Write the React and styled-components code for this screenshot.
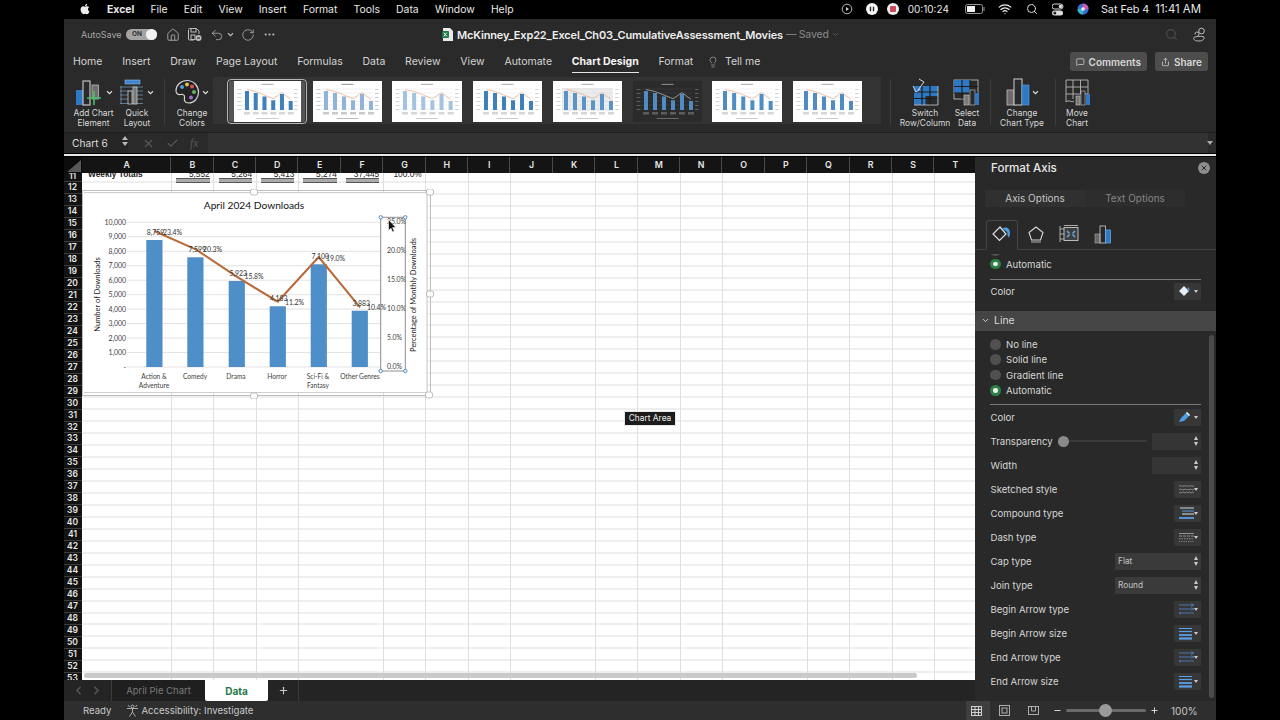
import React from 'react';
import styled, { createGlobalStyle } from 'styled-components';
import { FaApple } from 'react-icons/fa';
import { Home, Undo2, RotateCw, MoreHorizontal, Search, Wifi, Lightbulb, MessageSquare, Share, ChevronDown, X, Check, ChevronRight, ChevronLeft, Plus, Minus } from 'lucide-react';

const Global = createGlobalStyle`
  html, body { margin: 0; padding: 0; background: #000; }
  * { box-sizing: border-box; }
  body { font-family: Inter, "Liberation Sans", sans-serif; }
`;

const Stage = styled.div`
  width: 1280px; height: 720px; background: #000; padding: 0 64px; overflow: hidden;
`;
const Screen = styled.div`
  width: 1152px; height: 720px; display: flex; flex-direction: column; color: #e4e4e4; font-size: 10.5px;
`;

/* ---------- macOS menu bar ---------- */
const MenuBar = styled.div`
  height: 19px; flex: none; background: #000; display: flex; align-items: center; padding: 0 15px 1px 15px; color: #e8e8e8; font-size: 10.4px;
`;
const MenuList = styled.div`display: flex; align-items: center; gap: 16.2px; margin-left: 16px;`;
const MenuItem = styled.span`font-weight: ${p => (p.$bold ? 700 : 400)};`;
const StatusTray = styled.div`margin-left: auto; display: flex; align-items: center; gap: 0; font-size: 10px;`;
const TrayItem = styled.span`display: inline-flex; align-items: center; margin-left: ${p => p.$gap || 0}px; font-size: ${p => p.$size || 10}px;`;

/* ---------- title bar ---------- */
const TitleBar = styled.div`
  height: 31px; flex: none; background: #2a2a2a; display: flex; align-items: center; padding: 0 10px 0 17px; position: relative;
`;
const AutoLabel = styled.span`color: #a6a6a6; font-size: 9px; width: 40px; white-space: nowrap;`;
const Toggle = styled.span`
  width: 31px; height: 11px; margin-left: 5px; border-radius: 6px; background: #a5a5a5; position: relative; color: #333; font-size: 6.5px; font-weight: 700; line-height: 11px; padding-left: 6px;
  &::after { content: ''; position: absolute; right: 0; top: 0; width: 11px; height: 11px; border-radius: 50%; background: #f4f4f4; }
`;
const QuickIcon = styled.span`display: inline-flex; align-items: center; color: #bdbdbd; margin-left: ${p => p.$gap || 0}px;`;
const DocTitle = styled.div`
  display: flex; align-items: center; margin-left: 166px; font-size: 11px; font-weight: 600; color: #eeeeee; white-space: nowrap; letter-spacing: -0.15px;
`;
const DocSaved = styled.span`color: #7f7f7f; font-weight: 500; margin-left: 3px; font-size: 10.4px;`;
const TitleRight = styled.div`margin-left: auto; display: flex; align-items: center; gap: 14px;`;

/* ---------- ribbon tabs ---------- */
const TabBar = styled.div`
  height: 23px; flex: none; background: #2a2a2a; display: flex; align-items: center; padding: 0 8px 0 9px; font-size: 10.5px; position: relative;
`;
const TabList = styled.div`display: flex; align-items: center; gap: 19.75px; flex: 1;`;
const TabItem = styled.span`
  position: relative; color: ${p => (p.$active ? '#f4f4f4' : '#d4d4d4')}; font-weight: ${p => (p.$active ? 700 : 400)}; display: inline-flex; align-items: center; gap: 6px; white-space: nowrap; margin-left: ${p => p.$ml || 0}px;
  ${p => p.$active && `&::after { content: ''; position: absolute; left: 0; right: 0; bottom: -6px; height: 2px; background: #e6e6e6; }`}
`;
const PillButton = styled.button`
  height: 19px; border: 0; border-radius: 3px; background: #4d4d4d; color: #d8d8d8; font: 600 10px Inter, sans-serif; display: inline-flex; align-items: center; gap: 4px; padding: 0 6px; margin-left: 8px; width: ${p => p.$w}px; justify-content: center;
`;

/* ---------- ribbon ---------- */
const Ribbon = styled.div`
  height: 60px; flex: none; background: #2a2a2a; display: flex; align-items: flex-start; padding: 4px 0 0 6px; position: relative; border-bottom: 1px solid #1d1d1d;
`;
const RibbonBtn = styled.div`
  width: ${p => p.$w}px; margin-left: ${p => p.$ml || 0}px; display: flex; flex-direction: column; align-items: center; color: #d8d8d8; font-size: 8.4px; line-height: 9.6px; text-align: center; flex: none; white-space: nowrap;
`;
const RibbonIcon = styled.div`height: 28px; display: flex; align-items: center; justify-content: center; margin-bottom: 3px; margin-top: 1px; color: #ddd; gap: 2px;`;
const RibbonSep = styled.div`width: 1px; height: 46px; background: #3d3d3d; flex: none; margin-left: ${p => p.$ml || 0}px; margin-top: 2px;`;
const Gallery = styled.div`
  width: 668px; height: 47px; background: #333333; display: flex; align-items: flex-start; padding-top: 4px; position: relative; flex: none;
`;
const ThumbFrame = styled.div`
  width: ${p => p.$w}px; height: 41px; flex: none; margin-left: ${p => p.$ml}px; background: ${p => p.$dark ? '#222' : '#fff'}; display: flex; justify-content: center;
  ${p => p.$selected && `background: #555; outline: 1px solid #b5b5b5; outline-offset: 1px; border-radius: 2px;`}
`;
const ThumbInner = styled.svg`display: block; height: 41px; width: ${p => p.$w}px; background: ${p => p.$bg};`;

/* ---------- formula bar ---------- */
const FormulaBar = styled.div`height: 20px; flex: none; background: #2a2a2a; display: flex; align-items: stretch; position: relative;`;
const NameBox = styled.div`width: 64px; background: #262626; display: flex; align-items: center; padding-left: 8px; font-size: 10.2px; color: #dcdcdc; position: relative;`;
const Stepper = styled.span`position: absolute; right: 0; top: 3px; display: flex; flex-direction: column; gap: 2px;`;
const Tri = styled.i`
  display: block; width: 0; height: 0; border-left: ${p => p.$s || 3}px solid transparent; border-right: ${p => p.$s || 3}px solid transparent;
  ${p => p.$up ? `border-bottom: 4px solid ${p.$c || '#bbb'};` : `border-top: 4px solid ${p.$c || '#bbb'};`}
`;
const FxIcons = styled.div`width: 80px; display: flex; align-items: center; gap: 11px; padding-left: 14px; color: #5a5a5a; font: italic 11.5px "Liberation Serif", serif;`;
const FormulaInput = styled.div`flex: 1; background: #323232; margin: 0 8px 0 0; display: flex;`;
const FormulaDrop = styled.div`position: absolute; right: 3px; top: 8px;`;
const WhiteRule = styled.div`height: 4px; flex: none; background: #000; position: relative;
  &::after { content: ''; position: absolute; left: 0; right: 0; top: 1px; height: 2px; background: #e8e8e8; }`;

/* ---------- workspace ---------- */
const Work = styled.div`flex: 1; display: flex; min-height: 0;`;
const SheetColumn = styled.div`width: 911px; flex: none; display: flex; flex-direction: column; min-height: 0;`;
const ColHeader = styled.div`height: 16px; flex: none; display: flex; background: #141414;`;
const Corner = styled.div`width: 18px; flex: none; background: #0c0c0c; position: relative;
  &::after { content: ''; position: absolute; right: 1px; bottom: 1px; width: 0; height: 0; border-left: 14px solid transparent; border-bottom: 12px solid #585858; }`;
const ColCell = styled.div`
  width: ${p => p.$w}px; flex: none; text-align: center; font-size: 8.8px; font-weight: 600; line-height: 16px; color: #e6e6e6; border-right: 1px solid #4a4a4a; overflow: hidden; padding-left: 1px;
`;
const SheetBody = styled.div`flex: 1; display: flex; min-height: 0; position: relative; overflow: hidden;`;
const RowHeads = styled.div`width: 18px; flex: none; background: #121212; overflow: hidden;`;
const RowStack = styled.div`margin-top: -2.5px;`;
const RowHead = styled.div`
  height: 11.96px; line-height: 11.96px; text-align: center; font-size: 8.5px; font-weight: 600; color: #e8e8e8; border-bottom: 0.5px solid #3c3c3c; padding-right: 1px;
`;
const Cells = styled.div`
  flex: 1; position: relative; background-color: #fff; overflow: hidden;
  background-image:
    repeating-linear-gradient(to bottom, transparent 0, transparent 10.96px, #dfdfdf 10.96px, #dfdfdf 11.96px),
    linear-gradient(to right, transparent 88.8px, #dfdfdf 88.8px, #dfdfdf 89.6px, transparent 89.6px),
    repeating-linear-gradient(to right, #dfdfdf 0, #dfdfdf 0.8px, transparent 0.8px, transparent 42.4px);
  background-size: 100% 100%, 100% 100%, calc(100% - 89.3px) 100%;
  background-position: 0 -2.5px, 0 0, 89.3px 0;
  background-repeat: repeat-y, no-repeat, no-repeat;
`;
const TotalsRow = styled.div`display: flex; height: 9px; font: 400 8.3px "Liberation Sans", sans-serif; color: #222; line-height: 8px; margin-top: -3px;`;
const TotalsLabel = styled.div`width: 89.3px; padding-left: 6px; flex: none; font-weight: 700;`;
const TotalsCell = styled.div`
  width: 42.4px; flex: none; text-align: right; padding-right: 4px; position: relative;
  ${p => !p.$plain && `&::after { content: ''; position: absolute; left: 5px; right: 4px; top: 8px; height: 3px; border-top: 1px solid #555; border-bottom: 1px solid #555; background: #aaa; }`}
`;
const ChartWrap = styled.div`position: absolute; left: 0; top: 16px; width: 352px; height: 210px;`;
const HScroll = styled.div`position: absolute; left: 2px; top: 500px; width: 833px; height: 5px; border-radius: 3px; background: #c9c9c9;`;
const ChartTip = styled.div`
  position: absolute; left: 542px; top: 238px; width: 52px; text-align: center; background: #1c1c1c; color: #eee; font-size: 8.4px; line-height: 13px; height: 15px; border: 1px solid #e8e8e8; border-radius: 1px; white-space: nowrap;
`;

/* ---------- sheet tabs ---------- */
const SheetTabs = styled.div`height: 21px; flex: none; background: #242424; display: flex; align-items: stretch; font-size: 9.5px;`;
const TabNav = styled.div`width: 48px; display: flex; align-items: center; justify-content: center; gap: 5px; color: #555; border-right: 1px solid #3a3a3a; padding-right: 1px;`;
const SheetTab = styled.div`
  width: ${p => p.$w}px; display: flex; align-items: center; justify-content: center; white-space: nowrap;
  background: ${p => p.$active ? '#fff' : '#1f1f1f'}; color: ${p => p.$active ? '#1d7a46' : '#7a7a7a'}; font-weight: ${p => p.$active ? 700 : 400};
  ${p => p.$active && 'border-radius: 0 0 2px 2px; font-size: 10px;'}
`;
const AddSheet = styled.div`width: 31px; display: flex; align-items: center; justify-content: center; color: #c8c8c8; border-right: 1px solid #3a3a3a;`;

/* ---------- format pane ---------- */
const Pane = styled.aside`width: 241px; flex: none; background: #292929; display: flex; flex-direction: column; position: relative; color: #d6d6d6; font-size: 9.6px; min-height: 0; overflow: hidden;`;
const PaneHead = styled.div`height: 22px; flex: none; display: flex; align-items: center; justify-content: space-between; padding: 0 6px 0 16px; font-size: 11.6px; color: #e6e6e6; font-weight: 500;`;
const CloseBtn = styled.span`width: 12px; height: 12px; border-radius: 50%; background: #8e8e8e; color: #292929; display: flex; align-items: center; justify-content: center;`;
const Segments = styled.div`display: flex; margin: 11px 31px 0 10px; height: 17px; flex: none;`;
const Segment = styled.div`width: 100px; text-align: center; line-height: 17px; font-size: 10px; background: ${p => p.$on ? '#303030' : '#2d2d2d'}; color: ${p => p.$on ? '#c4c4c4' : '#858585'};`;
const IconTabs = styled.div`height: 30px; margin-top: 13px; flex: none; display: flex; padding-left: 11px; border-bottom: 1px solid #414141;`;
const IconTab = styled.div`width: 32px; margin-right: 1.5px; height: 30px; padding-bottom: 2px; display: flex; align-items: center; justify-content: center; ${p => p.$on && `border: 1px solid #454545; border-bottom: 1px solid #292929; border-radius: 3px 3px 0 0;`}`;
const PaneScrollArea = styled.div`flex: 1; min-height: 0; display: flex; flex-direction: column; padding-top: 3.5px;`;
const RadioPeek = styled.div`height: 3px; overflow: hidden; padding-left: 15px; flex: none; & > span { margin-top: -8px; }`;
const RadioRow = styled.div`height: 15.3px; display: flex; align-items: center; padding-left: 15px; gap: 5.5px; flex: none;`;
const Radio = styled.span`width: 10.5px; height: 10.5px; border-radius: 50%; background: ${p => p.$on ? '#2c7f46' : '#505050'}; display: flex; align-items: center; justify-content: center;
  ${p => p.$on && `&::after { content: ''; width: 4.5px; height: 4.5px; border-radius: 50%; background: #e8f5ec; }`}`;
const Divider = styled.div`height: ${p => p.$h || 1}px; background: #7a7a7a; margin: ${p => p.$mt || 6}px 15px 0; flex: none;`;
const PropRow = styled.div`height: 24px; display: flex; align-items: center; padding: 0 15px 0 15.5px; justify-content: space-between; flex: none;`;
const SwatchBtn = styled.span`width: 27px; height: 17px; background: #373737; border-radius: 1px; display: flex; align-items: center; justify-content: flex-start; padding-left: 4px; position: relative;
  &::after { content: ''; position: absolute; right: 3px; top: 7px; border-left: 2px solid transparent; border-right: 2px solid transparent; border-top: 3px solid #ccc; }`;
const SectionBar = styled.div`height: 20px; margin-top: 7px; background: #454545; display: flex; align-items: center; padding-left: 6px; gap: 4px; font-size: 10.4px; color: #d8d8d8; flex: none;`;
const LineOptions = styled.div`padding-top: 6px; display: flex; flex-direction: column; flex: none;`;
const NumberField = styled.span`width: 49px; height: 17px; background: #353535; position: relative; display: block;`;
const FieldStep = styled.span`position: absolute; right: 3px; top: 3px; display: flex; flex-direction: column; gap: 2px;`;
const SliderWrap = styled.span`flex: 1; display: flex; align-items: center; margin: 0 5px 0 5px; position: relative; height: 12px;`;
const SliderTrack = styled.span`flex: 1; height: 2px; background: #3a3a3a;`;
const SliderKnob = styled.span`position: absolute; left: 0; top: .5px; width: 11px; height: 11px; border-radius: 50%; background: #8a8a8a;`;
const SelectField = styled.span`width: 86px; height: 17px; background: #3a3a3a; font-size: 8.3px; color: #c4c4c4; line-height: 17px; padding-left: 3px; position: relative; display: block;`;
const PaneScrollbar = styled.div`position: absolute; right: 2px; top: 178px; width: 5px; height: 363px; background: #4b4b4b; border-radius: 3px;`;

/* ---------- status bar ---------- */
const StatusBar = styled.div`height: 19px; flex: none; background: #2e2e2e; display: flex; align-items: center; padding-left: 19px; font-size: 9.6px; color: #c8c8c8; position: relative;`;
const Access = styled.div`display: flex; align-items: center; gap: 2px; margin-left: 15px;`;
const ViewGroup = styled.div`margin-left: auto; display: flex; align-items: center; height: 19px; padding-right: 19px;`;
const ViewBtn = styled.span`width: ${p => p.$w || 29}px; height: 19px; display: flex; align-items: center; justify-content: center; background: ${p => p.$on ? '#3f3f3f' : 'transparent'}; padding-right: ${p => p.$on ? 4 : 0}px;`;
const ZoomTrack = styled.span`width: 80px; height: 3px; background: #6a6a6a; border-radius: 2px; position: relative; margin: 0 4px; display: block;`;
const ZoomKnob = styled.span`position: absolute; left: 33px; top: -5px; width: 13px; height: 13px; border-radius: 50%; background: #9a9a9a;`;
const ZoomText = styled.span`margin-left: 12px; color: #c8c8c8; font-size: 10px; width: 26px; white-space: nowrap;`;

/* ---------- small drawings ---------- */
const Caret = ({ c = '#ddd', s = 7 }) => (
  <svg width={s} height={s} viewBox="0 0 8 8"><path d="M1.2 2.6 4 5.4l2.8-2.8" fill="none" stroke={c} strokeWidth="1.4" /></svg>
);
const SaveIcon = () => (
  <svg width="15" height="15" viewBox="0 0 15 15" fill="none" stroke="#bdbdbd" strokeWidth="1">
    <path d="M1.5 2.5a1 1 0 0 1 1-1h7l2.5 2.5v3" /><path d="M7 13H2.5a1 1 0 0 1-1-1V3" /><rect x="4" y="1.5" width="5" height="3.5" /><rect x="4" y="8" width="4" height="4.5" />
    <circle cx="11.5" cy="11" r="3" fill="#bdbdbd" stroke="none" /><path d="M10 10.6h2.8M13 11.4h-2.8" stroke="#2a2a2a" strokeWidth=".7" />
  </svg>
);
const ExcelDoc = () => (
  <svg width="12" height="13" viewBox="0 0 12 13" style={{ marginRight: 3 }}>
    <path d="M1 0h7l3 3v10H1z" fill="#e9e9e9" /><rect x="0" y="3" width="7" height="7" rx="1" fill="#1f7a47" /><path d="m1.8 4.6 3 3.8m0-3.8-3 3.8" stroke="#fff" strokeWidth=".9" />
  </svg>
);
const AddChartIcon = () => (
  <svg width="30" height="30" viewBox="0 0 30 30">
    <rect x="2" y="13" width="7" height="15" fill="#2f78c4" /><rect x="9" y="4" width="7" height="24" fill="none" stroke="#cfcfcf" strokeWidth="1.1" /><rect x="18" y="8" width="6.5" height="14" fill="#6f6f6f" stroke="#bbb" strokeWidth=".8" />
    <path d="M20 14v14M13 21h14" stroke="#46c06a" strokeWidth="1.6" />
  </svg>
);
const QuickIconArt = () => (
  <svg width="25" height="26" viewBox="0 0 25 26" fill="none">
    <rect x="5" y="1" width="15" height="4" fill="#3d86cf" stroke="#8db9e2" strokeWidth=".6" />
    <path d="M0 8h23M0 12h23M0 16h23M0 20h23M0 24.5h23" stroke="#6f93b4" strokeWidth=".8" />
    <path d="M1 7v18" stroke="#6f93b4" strokeWidth=".8" />
    <rect x="8" y="12" width="4" height="13" fill="#2a2a2a" stroke="#c8c8c8" strokeWidth=".8" /><rect x="13" y="8" width="4" height="17" fill="#777" stroke="#c8c8c8" strokeWidth=".8" />
  </svg>
);
const PaletteIcon = () => (
  <svg width="25" height="26" viewBox="0 0 25 26">
    <path d="M12 1.5C6 1.5 1 6 1 11.5c0 3 2 4.5 4.5 4 2.5-.5 4.5.5 4 3-.4 2.5 0 5.5 4 5.5 6 0 10-5 10-11S18.5 1.5 12 1.5Z" fill="#232323" stroke="#d2d2d2" strokeWidth="1.2" />
    <circle cx="7" cy="8" r="2" fill="#4ea0e0" /><circle cx="12" cy="5.5" r="2" fill="#e8c04a" /><circle cx="17" cy="7.5" r="2" fill="#d9534f" /><circle cx="19" cy="13" r="2" fill="#63b463" /><circle cx="16" cy="18.5" r="2" fill="#a96cc9" />
  </svg>
);
const GridBlue = ({ w = 30, h = 28, children }) => <svg width={w} height={h} viewBox="0 0 30 28" fill="none">{children}</svg>;
const SwitchIcon = () => (
  <GridBlue>
    <rect x="4" y="8" width="24" height="19" fill="#2f78c4" /><rect x="15.5" y="18" width="12" height="9" fill="#2a2a2a" />
    <path d="M4 14h24M4 20.5h24M12 8v19M20 8v19" stroke="#1d1d1d" strokeWidth="1.2" /><path d="M4 27h24M28 8v19" stroke="#c9c9c9" strokeWidth=".8" />
    <path d="m9 1 5 3-6 8" stroke="#d6d6d6" strokeWidth="1" /><path d="M3 8l3 6 4-3" stroke="#d6d6d6" strokeWidth="1" />
  </GridBlue>
);
const SelectDataIcon = () => (
  <GridBlue>
    <rect x="2" y="2" width="24" height="19" stroke="#c9c9c9" strokeWidth=".8" /><rect x="2" y="2" width="16" height="13" fill="#2f78c4" />
    <path d="M2 8.5h24M2 15h24M10 2v19M18 2v19" stroke="#1d1d1d" strokeWidth="1.1" />
    <rect x="12" y="17" width="5" height="10" fill="#7a7a7a" stroke="#c9c9c9" strokeWidth=".6" /><rect x="18" y="12" width="5" height="15" fill="#2a2a2a" stroke="#c9c9c9" strokeWidth=".6" /><rect x="23" y="15" width="4" height="12" fill="#2f78c4" />
  </GridBlue>
);
const ChangeTypeIcon = () => (
  <svg width="24" height="28" viewBox="0 0 24 28" fill="none">
    <rect x="1" y="12" width="7" height="15" fill="#6b6b6b" stroke="#bbb" strokeWidth=".8" /><rect x="8" y="1" width="8" height="26" fill="#2a2a2a" stroke="#d0d0d0" strokeWidth="1" /><rect x="16" y="7" width="7" height="20" fill="#2f78c4" stroke="#5aa0e0" strokeWidth=".6" />
  </svg>
);
const MoveChartIcon = () => (
  <GridBlue>
    <path d="M4 24V2h22v16M4 9h22M4 16h22M11 2v19M18.5 2v14" stroke="#b8b8b8" strokeWidth=".9" /><path d="M4 24c3-3 5 1 8-1" stroke="#b8b8b8" strokeWidth=".9" />
    <rect x="14" y="18" width="4" height="9" fill="#777" stroke="#c8c8c8" strokeWidth=".6" /><rect x="19" y="13" width="4" height="14" fill="#2a2a2a" stroke="#c8c8c8" strokeWidth=".6" /><rect x="24" y="16" width="4" height="11" fill="#2f78c4" />
  </GridBlue>
);

const Thumb = ({ w, bg = '#fff', bars = '#4f8cc4', text = '#999', line = '#e8a987', plot }) => {
  const hs = [19, 17, 13.5, 9.7, 16, 9];
  const base = 29;
  const step = (9 * w) / 69;
  const xs = hs.map((_, i) => 11 + i * step);
  return (
    <ThumbInner $w={w} $bg={bg} viewBox={`0 0 ${w} 41`}>
      {plot && <rect x="9" y="7" width={w - 18} height="23" fill={plot} />}
      <rect x={w / 2 - 6} y="2.8" width="12" height="1.2" fill={text} opacity=".7" />
      {[8, 12, 16, 20, 24, 28].map(y => <path key={y} d={`M9 ${y}h${w - 18}`} stroke={text} strokeWidth=".2" opacity=".5" />)}
      {[8, 12, 16, 20, 24, 28].map(y => <React.Fragment key={y}><rect x="3.500" y={y} width="4" height=".9" fill={text} opacity=".45" /><rect x={w - 7} y={y} width="3.500" height=".9" fill={text} opacity=".45" /></React.Fragment>)}
      {xs.map((x, i) => <rect key={x} x={x} y={base - hs[i]} width="4" height={hs[i]} fill={bars} />)}
      <polyline points={xs.map((x, i) => `${x + 2},${base - hs[i] - 1.5}`).join(' ')} fill="none" stroke={line} strokeWidth=".7" />
      {xs.map(x => <rect key={x} x={x - 1} y="31" width="6" height="2.500" fill={text} opacity=".4" />)}
      <rect x={w / 2 - 11} y="37" width="22" height="1" fill={text} opacity=".5" />
    </ThumbInner>
  );
};

const ChartText = styled.text`font-family: Lato, "Open Sans", sans-serif; fill: #404040; font-size: ${p => p.$s || 6.9}px;`;

const Chart = () => {
  const bars = [[146.3, 240], [187.3, 257.3], [228.7, 281], [269.7, 306.3], [310.7, 264.3], [351.7, 310.7]];
  const pts = [[154.3, 231], [195.7, 249.3], [236.7, 276.7], [277.7, 301.7], [318.7, 257], [360, 307.3]];
  const vals = [['8,759', 146.7, 234.5], ['7,599', 188.5, 252], ['5,923', 229.5, 276], ['4,183', 270, 301], ['7,100', 311.5, 259], ['3,883', 352.5, 306]];
  const pcts = [['23.4%', 163, 234.5], ['20.3%', 203, 252], ['15.8%', 244.5, 278.5], ['11.2%', 285, 305], ['19.0%', 326, 260.5], ['10.4%', 367, 310]];
  const leftAxis = ['10,000', '9,000', '8,000', '7,000', '6,000', '5,000', '4,000', '3,000', '2,000', '1,000', '-'];
  const rightAxis = [['25.0%', 222], ['20.0%', 251], ['15.0%', 280], ['10.0%', 309], ['5.0%', 338], ['0.0%', 367]];
  const cats = [[154, 'Action &', 'Adventure'], [195, 'Comedy'], [236, 'Drama'], [277, 'Horror'], [318, 'Sci-Fi &', 'Fantasy'], [360, 'Other Genres']];
  const handle = (x, y) => <rect key={`${x}${y}`} x={x - 3.5} y={y - 3} width="7" height="6" rx="2" fill="#fff" stroke="#b5b5b5" strokeWidth=".9" />;
  return (
    <svg width="352" height="210" viewBox="82 189 352 210" style={{ display: 'block' }}>
      <rect x="82.5" y="190.5" width="348" height="205" fill="none" stroke="#bdbdbd" strokeWidth="1" />
      <rect x="83" y="193.5" width="344" height="198.5" fill="#fff" />
      <path d="M427 194v198M84 192.5h343M84 392.5h343" stroke="#cfcfcf" strokeWidth="1.2" fill="none" />
      {handle(254, 192)}{handle(430, 294)}{handle(254, 396)}{handle(430, 192)}{handle(429, 395)}
      <ChartText x="254" y="209" $s="10.2" textAnchor="middle" style={{ fill: '#111' }}>April 2024 Downloads</ChartText>
      {leftAxis.map((t, i) => <path key={t} d={`M127 ${222.3 + i * 14.47}H381`} stroke="#dadada" strokeWidth=".8" />)}
      {leftAxis.map((t, i) => <ChartText key={t} x="126" y={224.8 + i * 14.47} textAnchor="end">{t}</ChartText>)}
      <ChartText transform="translate(99.5 294.5) rotate(-90)" textAnchor="middle" $s="7.5" style={{ fill: '#222' }}>Number of Downloads</ChartText>
      {bars.map(([x, y]) => <rect key={x} x={x} y={y} width="16.2" height={367 - y} fill="#4f8fc9" />)}
      <polyline points={pts.map(p => p.join(',')).join(' ')} fill="none" stroke="#b8693a" strokeWidth="2" strokeLinejoin="round" />
      {vals.map(([t, x, y]) => <ChartText key={t} x={x} y={y} style={{ fill: '#333' }}>{t}</ChartText>)}
      {pcts.map(([t, x, y]) => <ChartText key={t} x={x} y={y} style={{ fill: '#333' }}>{t}</ChartText>)}
      {cats.map(([x, a, b]) => (
        <React.Fragment key={a}>
          <ChartText x={x} y="379.3" $s="6.6" textAnchor="middle">{a}</ChartText>
          {b && <ChartText x={x} y="388" $s="6.6" textAnchor="middle">{b}</ChartText>}
        </React.Fragment>
      ))}
      {rightAxis.map(([t, y]) => <ChartText key={t} x="387" y={y + 2.4}>{t}</ChartText>)}
      <rect x="380.7" y="217.3" width="24.6" height="153.7" fill="none" stroke="#8d8d8d" strokeWidth="1" />
      {[[380.7, 217.3], [405.3, 217.3], [380.7, 371], [405.3, 371]].map(([x, y]) => <circle key={`${x}${y}`} cx={x} cy={y} r="1.7" fill="#fff" stroke="#3f7fb5" strokeWidth=".9" />)}
      <ChartText transform="translate(415.5 295) rotate(-90)" textAnchor="middle" $s="7.5" style={{ fill: '#222' }}>Percentage of Monthly Downloads</ChartText>
      <path d="M388.5 219.5v11l2.4-2.3 1.7 3.8 1.7-.8-1.7-3.6h3.3z" fill="#111" stroke="#fff" strokeWidth=".6" />
    </svg>
  );
};

const PaneIcon = {
  fill: (
    <svg width="22" height="20" viewBox="0 0 22 20" fill="none"><path d="M9 3 2 10l6.500 6.500L15 10z" stroke="#e0e0e0" strokeWidth="1.200" /><path d="M11 5c3-3 8-1.500 8 4 0 1.500-.5 3.500-1.200 4.500-1.300-.7-1.300-3-1.300-4 0-2-2.500-3.500-5.500-4.500z" fill="#4d9de0" /></svg>
  ),
  penta: (
    <svg width="18" height="18" viewBox="0 0 18 18" fill="none"><path d="M9 2 16 7.500 13.500 15h-9L2 7.500z" stroke="#d4d4d4" strokeWidth="1.100" /><path d="M4 17h10" stroke="#d4d4d4" strokeWidth=".8" /></svg>
  ),
  size: (
    <svg width="20" height="20" viewBox="0 0 20 20" fill="none"><rect x="5" y="3.500" width="14" height="13" stroke="#bbb" strokeWidth="1" fill="#3f3f3f" /><path d="M1 2v16M1 5h4M1 15h4M1 10h4M5 1.500h14" stroke="#bbb" strokeWidth=".9" /><path d="M8 7l2.500 2.500M16 7l-2.500 2.500M8 13l2.500-2.500M16 13l-2.500-2.500" stroke="#6ab0ee" strokeWidth="1.400" /></svg>
  ),
  bars: (
    <svg width="18" height="20" viewBox="0 0 18 20" fill="none"><rect x="1" y="10" width="5" height="9" fill="#666" stroke="#aaa" strokeWidth=".6" /><rect x="6" y="2" width="5.500" height="17" stroke="#bbb" strokeWidth=".9" /><rect x="11.500" y="6" width="5" height="13" fill="#2f78c4" stroke="#6caee6" strokeWidth=".7" /></svg>
  ),
};
const LinesIcon = ({ kind }) => {
  const blue = '#5b9fe6';
  if (kind === 'sketch') return <svg width="17" height="11" viewBox="0 0 17 11" fill="none" stroke="#aaa" strokeWidth=".7"><path d="M1 2c2-1 3 1 5 0s3 1 5 0 3 1 5 0M1 5.500c2-1 3 1 5 0s3 1 5 0 3 1 5 0M1 9l1.500-1 1.500 1 1.500-1 1.500 1 1.500-1 1.500 1 1.500-1 1.500 1 1.500-1 1.500 1" /></svg>;
  if (kind === 'dash') return <svg width="17" height="11" viewBox="0 0 17 11" fill="none" stroke="#aaa"><path d="M1 1.500h15" strokeWidth=".8" /><path d="M1 4h15" strokeWidth=".8" strokeDasharray="3 1" /><path d="M1 6.800h15" strokeWidth=".8" strokeDasharray="1.500 1" /><path d="M1 9.500h15" strokeWidth=".8" strokeDasharray=".8 1" /></svg>;
  if (kind === 'compound') return <svg width="17" height="13" viewBox="0 0 17 13" fill="none"><path d="M2 1h14" stroke="#cfd8e0" strokeWidth="1" /><path d="M4 4h12" stroke={blue} strokeWidth="1" /><path d="M4 7h12" stroke="#dbe6f0" strokeWidth="1" /><path d="M1 11h15" stroke={blue} strokeWidth="1.800" /></svg>;
  if (kind === 'arrow') return <svg width="17" height="12" viewBox="0 0 17 12" fill="none" stroke="#4a7fb5"><path d="M1 2h15M1 6h15M1 10h15" strokeWidth=".9" /><path d="M13 .500l3 1.500-3 1.500M13 4.500l3 1.500-3 1.500M3 8.500l-2 1.500 2 1.500" strokeWidth=".7" /></svg>;
  return <svg width="17" height="13" viewBox="0 0 17 13" fill="none" stroke={blue}><path d="M1 1.500h13" strokeWidth="1" /><path d="M1 4.500h13" strokeWidth="1.200" /><path d="M1 8h13" strokeWidth="1.800" /><path d="M1 11.500h13" strokeWidth="2.200" /></svg>;
};
const Stepped = () => (
  <FieldStep><Tri $up $s={2} $c="#ccc" /><Tri $s={2} $c="#ccc" /></FieldStep>
);

const COLS = 'B C D E F G H I J K L M N O P Q R S T'.split(' ');
const MENU = ['File', 'Edit', 'View', 'Insert', 'Format', 'Tools', 'Data', 'Window', 'Help'];
const TABS = ['Home', 'Insert', 'Draw', 'Page Layout', 'Formulas', 'Data', 'Review', 'View', 'Automate'];
const ROWS = Array.from({ length: 43 }, (_, i) => i + 11);
const TOTALS = ['5,552', '5,264', '5,413', '5,274', '37,445'];
const THUMBS = [
  { w: 76, tw: 67, ml: 16, selected: true, bars: '#3f7fba' },
  { w: 69, ml: 8, bars: '#8fb3d9', text: '#777' },
  { w: 70, ml: 10, bars: '#a5c3e0' },
  { w: 69, ml: 11, bars: '#3f7fba' },
  { w: 69, ml: 11, plot: '#ececec', bars: '#5a93c8' },
  { w: 69, ml: 11, bg: '#2b2b2b', bars: '#4f8cc4', text: '#aaa', line: '#bbb' },
  { w: 70, ml: 10, bars: '#4f8cc4' },
  { w: 69, ml: 11, bars: '#4f8cc4' },
];

export default function App() {
  return (
    <Stage>
      <Global />
      <Screen>
        <MenuBar>
          <FaApple size={12} color="#eee" />
          <MenuList>
            <MenuItem $bold>Excel</MenuItem>
            {MENU.map(m => <MenuItem key={m}>{m}</MenuItem>)}
          </MenuList>
          <StatusTray>
            <svg width="12" height="12" viewBox="0 0 12 12" fill="none" stroke="#ccc"><circle cx="6" cy="6" r="4.800" strokeWidth=".9" /><path d="M5 4v4l3-2z" fill="#ccc" stroke="none" /></svg>
            <TrayItem $gap={13}>
              <svg width="12" height="12" viewBox="0 0 12 12"><circle cx="6" cy="6" r="6" fill="#f5f5f5" /><path d="M4.500 3.800v4.400M7.500 3.800v4.400" stroke="#222" strokeWidth="1.300" /></svg>
            </TrayItem>
            <TrayItem $gap={9}>
              <svg width="12" height="12" viewBox="0 0 12 12"><circle cx="6" cy="6" r="6" fill="#f0f0f0" /><rect x="3" y="3" width="6" height="6" rx="1" fill="#c94a5a" /></svg>
            </TrayItem>
            <TrayItem $gap={9}>00:10:24</TrayItem>
            <TrayItem $gap={16}>
              <svg width="20" height="10" viewBox="0 0 20 10"><rect x=".5" y=".5" width="17" height="9" rx="2" fill="none" stroke="#999" /><rect x="2" y="2" width="8" height="6" fill="#f0f0f0" /><rect x="18.500" y="3" width="1" height="4" fill="#999" /></svg>
            </TrayItem>
            <TrayItem $gap={13}><Wifi size={14} color="#eee" /></TrayItem>
            <TrayItem $gap={14}><Search size={12} color="#ddd" /></TrayItem>
            <TrayItem $gap={14}>
              <svg width="12" height="13" viewBox="0 0 12 13"><rect x="0" y="1" width="11" height="5" rx="2.500" fill="none" stroke="#ddd" /><circle cx="8.500" cy="3.500" r="1.800" fill="#ddd" /><rect x="0" y="7.500" width="11" height="5" rx="2.500" fill="#ddd" /><circle cx="2.800" cy="10" r="1.500" fill="#222" /></svg>
            </TrayItem>
            <TrayItem $gap={13}>
              <svg width="12" height="12" viewBox="0 0 12 12"><circle cx="6" cy="6" r="5.500" fill="#3b6fd4" /><path d="M6 .500A5.500 5.500 0 0 1 11.500 6H6z" fill="#cf5ab0" /><path d="M6 11.500A5.500 5.500 0 0 1 .500 6H6z" fill="#35b7c9" /><circle cx="6" cy="6" r="1.800" fill="#eee" /></svg>
            </TrayItem>
            <TrayItem $gap={12} $size={10.8}>Sat Feb 4</TrayItem>
            <TrayItem $gap={6} $size={11.4}>11:41 AM</TrayItem>
          </StatusTray>
        </MenuBar>

        <TitleBar>
          <AutoLabel>AutoSave</AutoLabel>
          <Toggle>ON</Toggle>
          <QuickIcon $gap={9}><Home size={14} strokeWidth={1.300} /></QuickIcon>
          <QuickIcon $gap={7}><SaveIcon /></QuickIcon>
          <QuickIcon $gap={8}><Undo2 size={14} strokeWidth={1.300} /></QuickIcon>
          <QuickIcon $gap={3}><Caret c="#bbb" /></QuickIcon>
          <QuickIcon $gap={7}><RotateCw size={14} strokeWidth={1.200} /></QuickIcon>
          <QuickIcon $gap={8}><MoreHorizontal size={13} /></QuickIcon>
          <DocTitle>
            <ExcelDoc />
            McKinney_Exp22_Excel_Ch03_CumulativeAssessment_Movies
            <DocSaved>— Saved</DocSaved>
            <ChevronDown size={9} color="#666" style={{ marginLeft: 2 }} />
          </DocTitle>
          <TitleRight>
            <Search size={13} color="#4f4f4f" />
            <svg width="14" height="15" viewBox="0 0 14 15" fill="none" stroke="#bdbdbd" strokeWidth="1"><circle cx="9.500" cy="4" r="2.800" /><path d="M3 7.500a2 2 0 1 1 2.500 1.500M1.500 11c1-2 9-2 10.500-1 .5 2-1 4-5 4S2 13 1.500 11Z" /></svg>
          </TitleRight>
        </TitleBar>

        <TabBar>
          <TabList>
            {TABS.map(t => <TabItem key={t}>{t}</TabItem>)}
            <TabItem $active>Chart Design</TabItem>
            <TabItem>Format</TabItem>
            <TabItem $ml={-6}><Lightbulb size={12} strokeWidth={1} />Tell me</TabItem>
          </TabList>
          <PillButton $w={77}><MessageSquare size={10} />Comments</PillButton>
          <PillButton $w={53}><Share size={10} />Share</PillButton>
        </TabBar>

        <Ribbon>
          <RibbonBtn $w={47}>
            <RibbonIcon><AddChartIcon /><Caret /></RibbonIcon>Add Chart<br />Element
          </RibbonBtn>
          <RibbonBtn $w={40}>
            <RibbonIcon><QuickIconArt /><Caret /></RibbonIcon>Quick<br />Layout
          </RibbonBtn>
          <RibbonSep $ml={7} />
          <RibbonBtn $w={42} $ml={6}>
            <RibbonIcon><PaletteIcon /><Caret /></RibbonIcon>Change<br />Colors
          </RibbonBtn>
          <Gallery>
            {THUMBS.map((t, i) => (
              <ThumbFrame key={i} $w={t.w} $ml={t.ml} $selected={t.selected} $dark={t.bg}>
                <Thumb {...t} w={t.tw || t.w} />
              </ThumbFrame>
            ))}
          </Gallery>
          <RibbonSep $ml={9} />
          <RibbonBtn $w={50} $ml={9}>
            <RibbonIcon><SwitchIcon /></RibbonIcon>Switch<br />Row/Column
          </RibbonBtn>
          <RibbonBtn $w={32} $ml={1}>
            <RibbonIcon><SelectDataIcon /></RibbonIcon>Select<br />Data
          </RibbonBtn>
          <RibbonSep $ml={7} />
          <RibbonBtn $w={46} $ml={8}>
            <RibbonIcon><ChangeTypeIcon /><Caret /></RibbonIcon>Change<br />Chart Type
          </RibbonBtn>
          <RibbonSep $ml={10} />
          <RibbonBtn $w={36} $ml={3}>
            <RibbonIcon><MoveChartIcon /></RibbonIcon>Move<br />Chart
          </RibbonBtn>
        </Ribbon>

        <FormulaBar>
          <NameBox>Chart 6<Stepper><Tri $up /><Tri /></Stepper></NameBox>
          <FxIcons><X size={13} /><Check size={13} /><span>fx</span></FxIcons>
          <FormulaInput />
          <FormulaDrop><Tri $c="#aaa" /></FormulaDrop>
        </FormulaBar>
        <WhiteRule />

        <Work>
          <SheetColumn>
            <ColHeader>
              <Corner />
              <ColCell $w={89.3}>A</ColCell>
              {COLS.map(c => <ColCell key={c} $w={42.4}>{c}</ColCell>)}
            </ColHeader>
            <SheetBody>
              <RowHeads>
                <RowStack>
                  {ROWS.map(r => <RowHead key={r}>{r}</RowHead>)}
                </RowStack>
              </RowHeads>
              <Cells>
                <TotalsRow>
                  <TotalsLabel>Weekly Totals</TotalsLabel>
                  {TOTALS.map(t => <TotalsCell key={t}>{t}</TotalsCell>)}
                  <TotalsCell $plain>100.0%</TotalsCell>
                </TotalsRow>
                <ChartWrap><Chart /></ChartWrap>
                <HScroll />
                <ChartTip>Chart Area</ChartTip>
              </Cells>
            </SheetBody>
            <SheetTabs>
              <TabNav><ChevronLeft size={13} strokeWidth={3} /><ChevronRight size={13} strokeWidth={3} /></TabNav>
              <SheetTab $w={93}>April Pie Chart</SheetTab>
              <SheetTab $w={63} $active>Data</SheetTab>
              <AddSheet><Plus size={11} strokeWidth={2.500} /></AddSheet>
            </SheetTabs>
          </SheetColumn>

          <Pane>
            <PaneHead>Format Axis<CloseBtn><X size={8} strokeWidth={3} /></CloseBtn></PaneHead>
            <Segments>
              <Segment $on>Axis Options</Segment>
              <Segment>Text Options</Segment>
            </Segments>
            <IconTabs>
              <IconTab $on>{PaneIcon.fill}</IconTab>
              <IconTab>{PaneIcon.penta}</IconTab>
              <IconTab>{PaneIcon.size}</IconTab>
              <IconTab>{PaneIcon.bars}</IconTab>
            </IconTabs>
            <PaneScrollArea>
              <RadioPeek><Radio /></RadioPeek>
              <RadioRow><Radio $on />Automatic</RadioRow>
              <Divider $mt={7} />
              <PropRow>Color
                <SwatchBtn><svg width="13" height="12" viewBox="0 0 13 12"><path d="M6 0 11 5 6 10 1 5z" fill="#e8eef5" /><path d="M10 1l2 3-3 1z" fill="#4d9de0" /></svg></SwatchBtn>
              </PropRow>
              <SectionBar><ChevronDown size={9} strokeWidth={2.500} />Line</SectionBar>
              <LineOptions>
                <RadioRow><Radio />No line</RadioRow>
                <RadioRow><Radio />Solid line</RadioRow>
                <RadioRow><Radio />Gradient line</RadioRow>
                <RadioRow><Radio $on />Automatic</RadioRow>
              </LineOptions>
              <Divider $h={1.5} />
              <PropRow>Color
                <SwatchBtn><svg width="13" height="12" viewBox="0 0 13 12"><path d="M1 11l2-4 6-6 3 3-6 6z" fill="#4d9de0" /><path d="M8 2l3 3 1-1-3-3z" fill="#eee" /></svg></SwatchBtn>
              </PropRow>
              <PropRow>Transparency
                <SliderWrap><SliderTrack /><SliderKnob /></SliderWrap>
                <NumberField><Stepped /></NumberField>
              </PropRow>
              <PropRow>Width<NumberField><Stepped /></NumberField></PropRow>
              <PropRow>Sketched style<SwatchBtn><LinesIcon kind="sketch" /></SwatchBtn></PropRow>
              <PropRow>Compound type<SwatchBtn><LinesIcon kind="compound" /></SwatchBtn></PropRow>
              <PropRow>Dash type<SwatchBtn><LinesIcon kind="dash" /></SwatchBtn></PropRow>
              <PropRow>Cap type<SelectField>Flat<Stepped /></SelectField></PropRow>
              <PropRow>Join type<SelectField>Round<Stepped /></SelectField></PropRow>
              <PropRow>Begin Arrow type<SwatchBtn><LinesIcon kind="arrow" /></SwatchBtn></PropRow>
              <PropRow>Begin Arrow size<SwatchBtn><LinesIcon kind="size" /></SwatchBtn></PropRow>
              <PropRow>End Arrow type<SwatchBtn><LinesIcon kind="arrow" /></SwatchBtn></PropRow>
              <PropRow>End Arrow size<SwatchBtn><LinesIcon kind="size" /></SwatchBtn></PropRow>
            </PaneScrollArea>
            <PaneScrollbar />
          </Pane>
        </Work>

        <StatusBar>
          Ready
          <Access>
            <svg width="13" height="13" viewBox="0 0 13 13" fill="none" stroke="#bbb" strokeWidth=".9"><circle cx="6.500" cy="2.500" r="1.500" /><path d="M1 4.500h11M6.500 4.500V8M6.500 8 3.500 12.500M6.500 8l3 4.500M2 1l1.500 2M11 1 9.500 3" /></svg>
            Accessibility: Investigate
          </Access>
          <ViewGroup>
            <ViewBtn $on $w={24}><svg width="11" height="10" viewBox="0 0 11 10" fill="none" stroke="#ddd" strokeWidth=".9"><rect x=".5" y=".5" width="10" height="9" /><path d="M.5 3.500h10M.5 6.500h10M4 .5v9M7.500 .5v9" /></svg></ViewBtn>
            <ViewBtn><svg width="11" height="11" viewBox="0 0 11 11" fill="none" stroke="#bbb" strokeWidth=".9"><rect x=".5" y=".5" width="10" height="10" /><rect x="3" y="3" width="5" height="5" /></svg></ViewBtn>
            <ViewBtn><svg width="11" height="10" viewBox="0 0 11 10" fill="none" stroke="#bbb" strokeWidth=".9"><rect x=".5" y=".5" width="10" height="8" /><path d="M3.500 .5V5h4V.5" /></svg></ViewBtn>
            <Minus size={9} strokeWidth={2.500} color="#ddd" style={{ marginLeft: 5 }} />
            <ZoomTrack><ZoomKnob /></ZoomTrack>
            <Plus size={9} strokeWidth={2.500} color="#ddd" />
            <ZoomText>100%</ZoomText>
          </ViewGroup>
        </StatusBar>
      </Screen>
    </Stage>
  );
}
